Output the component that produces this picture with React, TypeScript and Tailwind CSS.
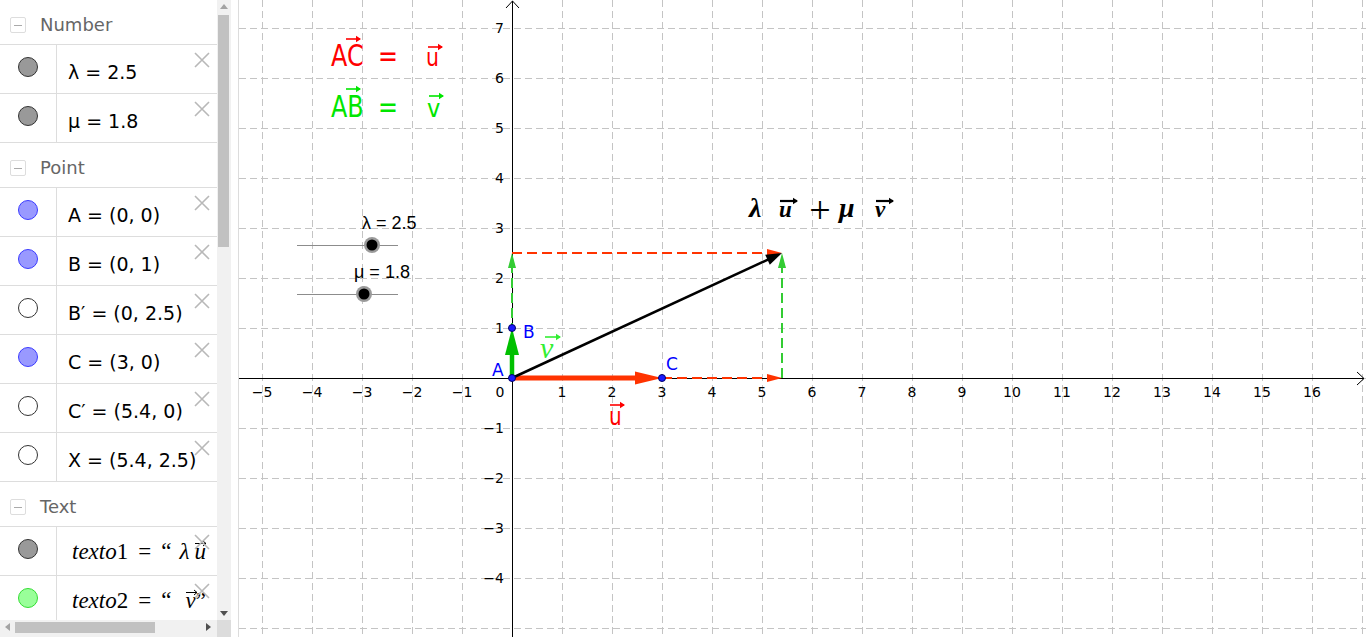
import React from "react";

const RED = "#ff3300";
const GREEN = "#00c000";
const GRID = "#c4c4c4";

type Dot = "gray" | "blue" | "white" | "green";

const dotClass: Record<Dot, string> = {
  gray: "bg-[#999999] border-[#333333]",
  blue: "bg-[#9999ff] border-[#3b3bff]",
  white: "bg-white border-[#333333]",
  green: "bg-[#99ff99] border-[#33dd33]",
};

function Close() {
  return (
    <svg className="absolute right-[7px] top-[7px] h-[16px] w-[16px]" viewBox="0 0 16 16">
      <path d="M1 1L15 15M15 1L1 15" stroke="#b8b8b8" strokeWidth="1.6" />
    </svg>
  );
}

function Header({ label }: { label: string }) {
  return (
    <div className="flex h-[45px] items-start border-b border-[#dddddd] pt-[14px] pl-[10px]">
      <div className="mt-[3px] flex h-[16px] w-[16px] items-center justify-center rounded-[2px] border border-[#dddddd]">
        <div className="h-px w-[8px] bg-[#aaaaaa]" />
      </div>
      <span className="ml-[14px] text-[18px] leading-[21px] text-[#666666]">{label}</span>
    </div>
  );
}

function Row({ dot, children, serif }: { dot: Dot; children: React.ReactNode; serif?: boolean }) {
  return (
    <div className="relative flex h-[49px] border-b border-[#dddddd]">
      <div className="flex w-[57px] shrink-0 justify-center border-r border-[#dddddd] pt-[12px]">
        <div className={`h-[20px] w-[20px] rounded-full border ${dotClass[dot]}`} />
      </div>
      {serif ? (
        <div className="whitespace-nowrap pl-[15px] pt-[12px] text-[23px] leading-[26px] text-black [font-family:'Liberation_Serif',serif]">
          {children}
        </div>
      ) : (
        <div className="whitespace-nowrap pl-[11px] pt-[16px] text-[19px] leading-[22px] text-black">{children}</div>
      )}
      <Close />
    </div>
  );
}

function Vec({ ch }: { ch: string }) {
  return (
    <span className="relative inline-block italic">
      {ch}
      <svg className="absolute left-[1px] top-[1px] h-[7px] w-[12px]" viewBox="0 0 12 7">
        <path d="M0 3.5H11M8 1L11 3.5L8 6" stroke="#000" fill="none" strokeWidth="1" />
      </svg>
    </span>
  );
}

function OverArrow({ x1, x2, y, color, w = 1.6 }: { x1: number; x2: number; y: number; color: string; w?: number }) {
  return (
    <g>
      <path d={`M${x1} ${y}H${x2 - 1}`} stroke={color} strokeWidth={w} fill="none" />
      <path d={`M${x2 - 5} ${y - 3.2}L${x2} ${y}L${x2 - 5} ${y + 3.2}Z`} fill={color} />
    </g>
  );
}

function Graph() {
  const vx: number[] = [];
  for (let x = 262; x <= 1362; x += 50) vx.push(x);
  const hy: number[] = [];
  for (let y = 28; y <= 628; y += 50) hy.push(y);
  const xl: number[] = [];
  for (let v = -5; v <= 16; v++) if (v !== 0) xl.push(v);
  const yl = [7, 6, 5, 4, 3, 2, 1, -1, -2, -3, -4];
  const lab = (v: number) => (v < 0 ? "\u2212" + Math.abs(v) : String(v));
  const sans = "'DejaVu Sans', sans-serif";

  return (
    <svg width="1127" height="637" viewBox="239 0 1127 637" className="block">
      {/* grid */}
      {vx.map((x) => (
        <line key={"v" + x} x1={x + 0.5} y1={0} x2={x + 0.5} y2={637} stroke={GRID} strokeDasharray="7 4" />
      ))}
      {hy.map((y) => (
        <line key={"h" + y} x1={239} y1={y + 0.5} x2={1366} y2={y + 0.5} stroke={GRID} strokeDasharray="7 4" />
      ))}

      {/* axes */}
      <line x1={239} y1={378.5} x2={1364} y2={378.5} stroke="#000" />
      <path d="M1357 372L1364 378.5L1357 385" stroke="#000" fill="none" />
      <line x1={512.5} y1={1} x2={512.5} y2={637} stroke="#000" />
      <path d="M506 8L512.5 1L519 8" stroke="#000" fill="none" />

      {xl.map((v) => (
        <text key={"xl" + v} x={512 + 50 * v} y={397} fontSize="14" textAnchor="middle" fontFamily={sans} fill="#000">
          {lab(v)}
        </text>
      ))}
      <text x={500} y={397} fontSize="14" textAnchor="middle" fontFamily={sans} fill="#000">0</text>
      {yl.map((v) => (
        <text key={"yl" + v} x={504} y={378 - 50 * v + 5} fontSize="14" textAnchor="end" fontFamily={sans} fill="#000">
          {lab(v)}
        </text>
      ))}

      {/* dashed translated components */}
      <g stroke={RED} strokeWidth="2" strokeDasharray="10 5" fill="none">
        <line x1={512} y1={378} x2={768} y2={378} />
        <line x1={512} y1={253} x2={768} y2={253} />
      </g>
      <path d="M767 374L782 378L767 382Z" fill={RED} />
      <path d="M767 249L782 253L767 257Z" fill={RED} />
      <g stroke="#33cc33" strokeWidth="2" strokeDasharray="10 5" fill="none">
        <line x1={512} y1={378} x2={512} y2={267} />
        <line x1={782} y1={378} x2={782} y2={267} />
      </g>
      <path d="M508 268L512 253L516 268Z" fill="#33cc33" />
      <path d="M778 268L782 253L786 268Z" fill="#33cc33" />

      {/* solid vectors */}
      <line x1={512} y1={378} x2={637} y2={378} stroke={RED} strokeWidth="5" />
      <path d="M635 371.5L662 378L635 384.5Z" fill={RED} />
      <line x1={512} y1={378} x2={512} y2={352} stroke={GREEN} strokeWidth="4.5" />
      <path d="M505 355L512 328L519 355Z" fill={GREEN} />
      <line x1={512} y1={378} x2={768.5} y2={259.3} stroke="#000" strokeWidth="2.5" />
      <path d="M782 253L769.8 264.7L765.2 254.7Z" fill="#000" />

      {/* points */}
      {[
        [512, 378],
        [512, 328],
        [662, 378],
      ].map(([x, y]) => (
        <circle key={x + "-" + y} cx={x} cy={y} r={3.5} fill="#1a1aff" stroke="#000066" strokeWidth="1" />
      ))}
      <text x={492} y={376} fontSize="17" fontFamily={sans} fill="#0000ff">A</text>
      <text x={523} y={338} fontSize="17" fontFamily={sans} fill="#0000ff">B</text>
      <text x={666} y={370} fontSize="17" fontFamily={sans} fill="#0000ff">C</text>

      {/* vector labels */}
      <text transform="translate(609 425) scale(0.8 1)" fontSize="25" fontFamily={sans} fill="#ff0000">u</text>
      <OverArrow x1={610} x2={625} y={405} color="#ff0000" />
      <text x={540} y={358} fontSize="30" fontStyle="italic" fontFamily="'Liberation Serif', serif" fill="#33ee33">v</text>
      <OverArrow x1={545} x2={561} y={337} color="#33ee33" />

      {/* equations */}
      <text transform="translate(331 66) scale(0.77 1)" fontSize="31" fontFamily={sans} fill="#ff0000">AC</text>
      <OverArrow x1={346} x2={361} y={39} color="#ff0000" />
      <text transform="translate(378 66) scale(0.77 1)" fontSize="31" fontFamily={sans} fill="#ff0000">=</text>
      <text transform="translate(426 66) scale(0.85 1)" fontSize="24" fontFamily={sans} fill="#ff0000">u</text>
      <OverArrow x1={428} x2={443} y={47} color="#ff0000" />

      <text transform="translate(331 117) scale(0.77 1)" fontSize="31" fontFamily={sans} fill="#00e600">AB</text>
      <OverArrow x1={346} x2={361} y={89} color="#00e600" />
      <text transform="translate(378 117) scale(0.77 1)" fontSize="31" fontFamily={sans} fill="#00e600">=</text>
      <text transform="translate(427 117) scale(0.9 1)" fontSize="25" fontFamily={sans} fill="#00e600">v</text>
      <OverArrow x1={429} x2={444} y={96} color="#00e600" />

      {/* lambda u + mu v */}
      <g fontFamily="'Liberation Serif', serif" fontWeight="bold" fontStyle="italic" fill="#000">
        <text x={749} y={217} fontSize="28">λ</text>
        <text x={779} y={217} fontSize="23">u</text>
        <text x={839} y={217} fontSize="28">μ</text>
        <text x={875} y={217} fontSize="23">v</text>
      </g>
      <text x={820} y={223} fontSize="38" textAnchor="middle" fontFamily="'Liberation Serif', serif" fill="#000">+</text>
      <OverArrow x1={780} x2={798} y={201} color="#000" w={2.2} />
      <OverArrow x1={876} x2={894} y={201} color="#000" w={2.2} />

      {/* sliders */}
      <line x1={297} y1={245.5} x2={398} y2={245.5} stroke="#8c8c8c" />
      <circle cx={372} cy={245} r={8} fill="#9a9a9a" />
      <circle cx={372} cy={245} r={5.5} fill="#000" />
      <text x={362} y={229} fontSize="18" fontFamily="'Liberation Sans', sans-serif" fill="#000">λ = 2.5</text>
      <line x1={297} y1={294.5} x2={398} y2={294.5} stroke="#8c8c8c" />
      <circle cx={364} cy={294} r={8} fill="#9a9a9a" />
      <circle cx={364} cy={294} r={5.5} fill="#000" />
      <text x={354} y={278} fontSize="18" fontFamily="'Liberation Sans', sans-serif" fill="#000">μ = 1.8</text>
    </svg>
  );
}

function Panel() {
  return (
    <div className="flex h-[637px] w-[231px] shrink-0 flex-col">
      <div className="flex h-[620px]">
        <div className="h-full w-[217px] overflow-hidden bg-white">
          <Header label="Number" />
          <Row dot="gray">λ = 2.5</Row>
          <Row dot="gray">μ = 1.8</Row>
          <Header label="Point" />
          <Row dot="blue">A = (0, 0)</Row>
          <Row dot="blue">B = (0, 1)</Row>
          <Row dot="white">B′ = (0, 2.5)</Row>
          <Row dot="blue">C = (3, 0)</Row>
          <Row dot="white">C′ = (5.4, 0)</Row>
          <Row dot="white">X = (5.4, 2.5)</Row>
          <Header label="Text" />
          <Row dot="gray" serif>
            <span className="italic">texto</span>1<span className="mx-[10px]">=</span>“<span className="ml-[8px] mr-[5px] italic">λ</span>
            <Vec ch="u" />
          </Row>
          <Row dot="green" serif>
            <span className="italic">texto</span>2<span className="mx-[10px]">=</span>“<span className="ml-[14px]" />
            <Vec ch="v" />”
          </Row>
        </div>
        <div className="relative h-full w-[14px] bg-[#f1f1f1]">
          <div className="absolute left-[1px] top-[15px] h-[232px] w-[11px] bg-[#c1c1c1]" />
          <div className="absolute left-[3px] top-[4px] h-0 w-0 border-x-[4px] border-b-[5px] border-x-transparent border-b-[#a3a3a3]" />
          <div className="absolute bottom-[4px] left-[3px] h-0 w-0 border-x-[4px] border-t-[5px] border-x-transparent border-t-[#505050]" />
        </div>
      </div>
      <div className="relative h-[17px] w-[231px] bg-[#f1f1f1]">
        <div className="absolute left-[15px] top-[2px] h-[11px] w-[140px] bg-[#c1c1c1]" />
        <div className="absolute left-[5px] top-[3px] h-0 w-0 border-y-[4px] border-r-[5px] border-y-transparent border-r-[#a3a3a3]" />
        <div className="absolute left-[206px] top-[3px] h-0 w-0 border-y-[4px] border-l-[5px] border-y-transparent border-l-[#505050]" />
        <div className="absolute left-[217px] top-0 h-full w-[14px] bg-[#dcdcdc]" />
      </div>
    </div>
  );
}

export default function App() {
  return (
    <div className="flex h-[637px] w-[1366px] overflow-hidden bg-white [font-family:'DejaVu_Sans',sans-serif]">
      <Panel />
      <div className="h-full w-[8px] shrink-0 border-r border-[#dcdcdc] bg-white" />
      <Graph />
    </div>
  );
}
